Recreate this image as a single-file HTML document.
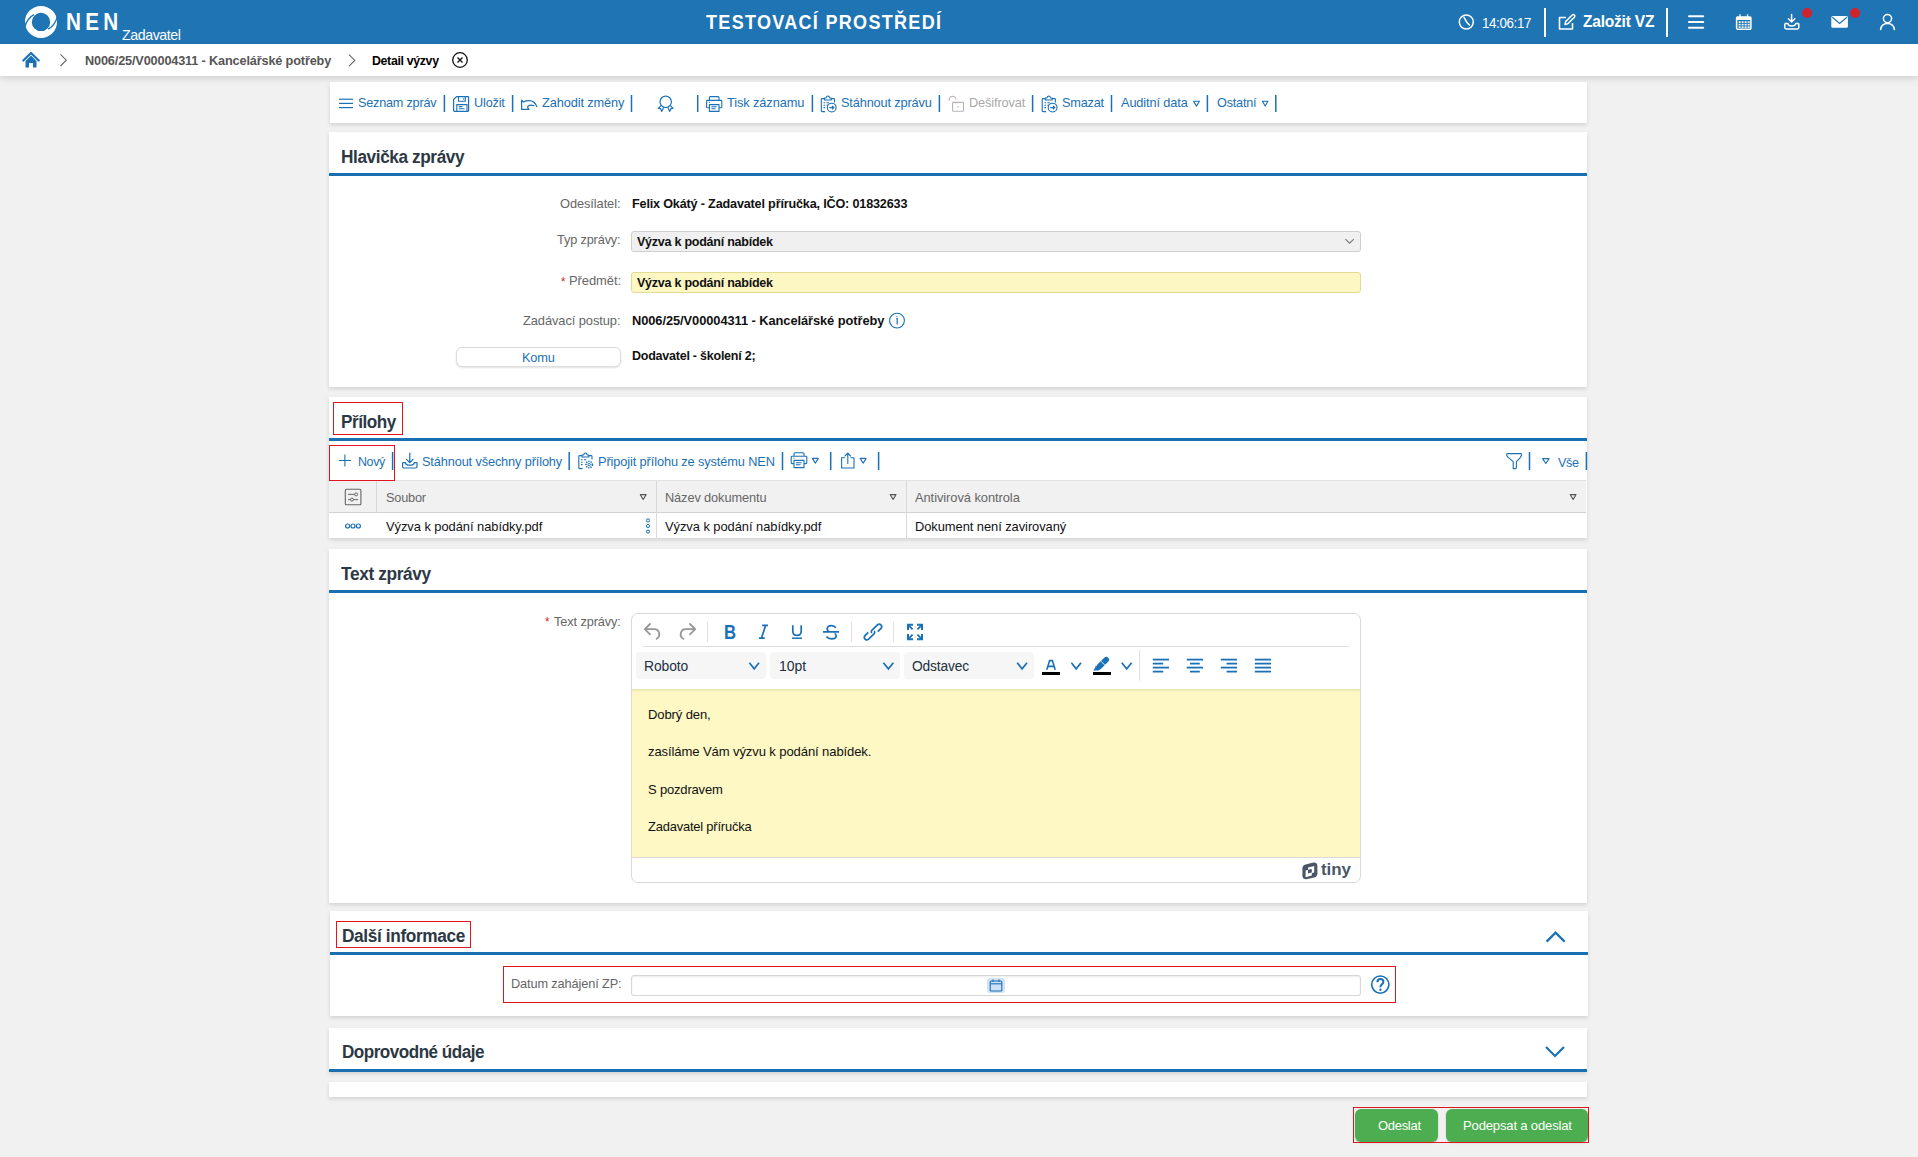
<!DOCTYPE html>
<html lang="cs"><head><meta charset="utf-8"><title>NEN - Detail výzvy</title>
<style>
html,body{margin:0;padding:0;}
body{width:1918px;height:1157px;overflow:hidden;background:#f1f1f1;position:relative;font-family:'Liberation Sans', sans-serif;}
span{position:absolute;white-space:nowrap;}
svg{position:absolute;left:0;top:0;}
</style></head><body>
<div style="position:absolute;left:0px;top:0px;width:1918px;height:44px;background:#1f74b4"></div>
<div style="position:absolute;left:0px;top:44px;width:1918px;height:32px;background:#fff;box-shadow:0 2px 7px rgba(0,0,0,0.15)"></div>
<div style="position:absolute;left:330px;top:82px;width:1257px;height:41px;background:#fff;box-shadow:0 2px 4px rgba(0,0,0,0.13)"></div>
<div style="position:absolute;left:329px;top:132px;width:1258px;height:255px;background:#fff;box-shadow:0 2px 4px rgba(0,0,0,0.13)"></div>
<div style="position:absolute;left:329px;top:397px;width:1258px;height:141px;background:#fff;box-shadow:0 2px 4px rgba(0,0,0,0.13)"></div>
<div style="position:absolute;left:329px;top:549px;width:1258px;height:354px;background:#fff;box-shadow:0 2px 4px rgba(0,0,0,0.13)"></div>
<div style="position:absolute;left:330px;top:911px;width:1258px;height:105px;background:#fff;box-shadow:0 2px 4px rgba(0,0,0,0.13)"></div>
<div style="position:absolute;left:329px;top:1028px;width:1258px;height:44px;background:#fff;box-shadow:0 2px 4px rgba(0,0,0,0.13)"></div>
<div style="position:absolute;left:329px;top:1082px;width:1258px;height:15px;background:#fff;box-shadow:0 2px 4px rgba(0,0,0,0.13)"></div>
<div style="position:absolute;left:329px;top:173px;width:1258px;height:3px;background:#1a6fb1"></div>
<div style="position:absolute;left:631px;top:231px;width:730px;height:21px;background:#f0f0f0;border:1px solid #cfcfcf;border-radius:3px;box-sizing:border-box"></div>
<div style="position:absolute;left:631px;top:272px;width:730px;height:21px;background:#fdf7c3;border:1px solid #e3db93;border-radius:3px;box-sizing:border-box"></div>
<div style="position:absolute;left:456px;top:347px;width:165px;height:20px;background:#fff;border:1px solid #dcdcdc;border-radius:6px;box-sizing:border-box;box-shadow:0 1px 2px rgba(0,0,0,0.12)"></div>
<div style="position:absolute;left:333px;top:402px;width:70px;height:33px;border:1.5px solid #e0161f;box-sizing:border-box;z-index:5"></div>
<div style="position:absolute;left:329px;top:438px;width:1258px;height:3px;background:#1a6fb1"></div>
<div style="position:absolute;left:329px;top:445px;width:66px;height:36px;border:1.5px solid #e0161f;box-sizing:border-box;z-index:5"></div>
<div style="position:absolute;left:329px;top:480px;width:1257px;height:33px;background:#f1f1f1;border-top:1px solid #e2e2e2;border-bottom:1px solid #d2d2d2;box-sizing:border-box"></div>
<div style="position:absolute;left:376px;top:481px;width:1px;height:32px;background:#d9d9d9"></div>
<div style="position:absolute;left:656px;top:481px;width:1px;height:57px;background:#d9d9d9"></div>
<div style="position:absolute;left:906px;top:481px;width:1px;height:57px;background:#d9d9d9"></div>
<div style="position:absolute;left:329px;top:590px;width:1258px;height:3px;background:#1a6fb1"></div>
<div style="position:absolute;left:631px;top:613px;width:730px;height:270px;background:#fff;border:1px solid #d9d9d9;border-radius:7px;box-sizing:border-box"></div>
<div style="position:absolute;left:632px;top:689px;width:728px;height:168px;background:#fdf8c4;border-bottom:1px solid #d9d9d9;box-shadow:inset 0 3px 3px -2px rgba(0,0,0,0.12)"></div>
<div style="position:absolute;left:643px;top:645.5px;width:706px;height:1.2000000000000455px;background:#dedede"></div>
<div style="position:absolute;left:707.1px;top:622px;width:1.1000000000000227px;height:20px;background:#e0e0e0"></div>
<div style="position:absolute;left:851.2px;top:622px;width:1.1000000000000227px;height:20px;background:#e0e0e0"></div>
<div style="position:absolute;left:893.3px;top:622px;width:1.1000000000000227px;height:20px;background:#e0e0e0"></div>
<div style="position:absolute;left:1138.9px;top:650px;width:1.099999999999909px;height:31px;background:#e0e0e0"></div>
<div style="position:absolute;left:636px;top:652px;width:130px;height:27px;background:#f6f6f6;border-radius:4px"></div>
<div style="position:absolute;left:770px;top:652px;width:130px;height:27px;background:#f6f6f6;border-radius:4px"></div>
<div style="position:absolute;left:904px;top:652px;width:130px;height:27px;background:#f6f6f6;border-radius:4px"></div>
<div style="position:absolute;left:1042px;top:672px;width:18px;height:3px;background:#000"></div>
<div style="position:absolute;left:1093px;top:672px;width:18px;height:3px;background:#000"></div>
<div style="position:absolute;left:336px;top:921px;width:135px;height:27px;border:1.5px solid #e0161f;box-sizing:border-box;z-index:5"></div>
<div style="position:absolute;left:330px;top:952px;width:1258px;height:3px;background:#1a6fb1"></div>
<div style="position:absolute;left:503px;top:966px;width:893px;height:37px;border:1.5px solid #e0161f;box-sizing:border-box;z-index:5"></div>
<div style="position:absolute;left:631px;top:975px;width:730px;height:21px;background:#fff;border:1px solid #d6d6d6;border-radius:3px;box-sizing:border-box;box-shadow:inset 0 1px 2px rgba(0,0,0,0.08)"></div>
<div style="position:absolute;left:987px;top:977.6px;width:18px;height:15.799999999999955px;background:#cfe1f3;border-radius:3px"></div>
<div style="position:absolute;left:329px;top:1069px;width:1258px;height:3px;background:#1a6fb1"></div>
<div style="position:absolute;left:1353px;top:1107px;width:236px;height:36px;border:1.5px solid #e0161f;box-sizing:border-box;z-index:5"></div>
<div style="position:absolute;left:1355px;top:1109px;width:83px;height:32.5px;background:#4cae50;border-radius:6px;box-shadow:0 1px 2px rgba(0,0,0,0.2)"></div>
<div style="position:absolute;left:1446px;top:1109px;width:142px;height:32.5px;background:#4cae50;border-radius:6px;box-shadow:0 1px 2px rgba(0,0,0,0.2)"></div>

<span style="left:65.7px;top:10.83px;font-size:23.5px;line-height:23.5px;font-weight:700;color:#fff;letter-spacing:4.903px;transform:scaleX(0.8800);transform-origin:0 0;">NEN</span>
<span style="left:122.0px;top:27.25px;font-size:15px;line-height:15px;font-weight:400;color:#fff;letter-spacing:-0.442px;transform:scaleX(0.9464);transform-origin:0 0;">Zadavatel</span>
<span style="left:705.8px;top:12.30px;font-size:20px;line-height:20px;font-weight:700;color:#fff;letter-spacing:1.459px;transform:scaleX(0.9000);transform-origin:0 0;">TESTOVACÍ PROSTŘEDÍ</span>
<span style="left:1482.4px;top:15.60px;font-size:14px;line-height:14px;font-weight:400;color:#fff;letter-spacing:-0.373px;transform:scaleX(0.9521);transform-origin:0 0;">14:06:17</span>
<span style="left:1582.5px;top:14.40px;font-size:16px;line-height:16px;font-weight:700;color:#fff;letter-spacing:-0.235px;transform:scaleX(0.9721);transform-origin:0 0;">Založit VZ</span>
<span style="left:84.5px;top:53.95px;font-size:13px;line-height:13px;font-weight:700;color:#555;letter-spacing:-0.156px;transform:scaleX(0.9770);transform-origin:0 0;">N006/25/V00004311 - Kancelářské potřeby</span>
<span style="left:372.0px;top:53.95px;font-size:13px;line-height:13px;font-weight:700;color:#000;letter-spacing:-0.347px;transform:scaleX(0.9487);transform-origin:0 0;">Detail výzvy</span>
<span style="left:358.4px;top:95.75px;font-size:13px;line-height:13px;font-weight:400;color:#1b71b6;letter-spacing:-0.207px;transform:scaleX(0.9726);transform-origin:0 0;">Seznam zpráv</span>
<span style="left:473.6px;top:95.75px;font-size:13px;line-height:13px;font-weight:400;color:#1b71b6;letter-spacing:-0.164px;transform:scaleX(0.9748);transform-origin:0 0;">Uložit</span>
<span style="left:541.5px;top:95.75px;font-size:13px;line-height:13px;font-weight:400;color:#1b71b6;letter-spacing:-0.116px;transform:scaleX(0.9836);transform-origin:0 0;">Zahodit změny</span>
<span style="left:727.0px;top:95.75px;font-size:13px;line-height:13px;font-weight:400;color:#1b71b6;letter-spacing:-0.106px;transform:scaleX(0.9853);transform-origin:0 0;">Tisk záznamu</span>
<span style="left:840.9px;top:95.75px;font-size:13px;line-height:13px;font-weight:400;color:#1b71b6;letter-spacing:-0.137px;transform:scaleX(0.9798);transform-origin:0 0;">Stáhnout zprávu</span>
<span style="left:968.6px;top:95.75px;font-size:13px;line-height:13px;font-weight:400;color:#a8a8a8;letter-spacing:-0.120px;transform:scaleX(0.9816);transform-origin:0 0;">Dešifrovat</span>
<span style="left:1061.8px;top:95.75px;font-size:13px;line-height:13px;font-weight:400;color:#1b71b6;letter-spacing:-0.200px;transform:scaleX(0.9773);transform-origin:0 0;">Smazat</span>
<span style="left:1121.0px;top:95.75px;font-size:13px;line-height:13px;font-weight:400;color:#1b71b6;letter-spacing:-0.119px;transform:scaleX(0.9812);transform-origin:0 0;">Auditní data</span>
<span style="left:1216.7px;top:95.75px;font-size:13px;line-height:13px;font-weight:400;color:#1b71b6;letter-spacing:-0.196px;transform:scaleX(0.9719);transform-origin:0 0;">Ostatní</span>
<span style="left:341.4px;top:147.70px;font-size:18px;line-height:18px;font-weight:700;color:#2c3844;letter-spacing:-0.420px;transform:scaleX(0.9565);transform-origin:0 0;">Hlavička zprávy</span>
<span style="left:560.3px;top:197.15px;font-size:13px;line-height:13px;font-weight:400;color:#666666;letter-spacing:-0.083px;transform:scaleX(0.9866);transform-origin:0 0;">Odesílatel:</span>
<span style="left:631.8px;top:197.15px;font-size:13px;line-height:13px;font-weight:700;color:#111;letter-spacing:-0.182px;transform:scaleX(0.9713);transform-origin:0 0;">Felix Okátý - Zadavatel příručka, IČO: 01832633</span>
<span style="left:557.2px;top:232.75px;font-size:13px;line-height:13px;font-weight:400;color:#666666;letter-spacing:-0.145px;transform:scaleX(0.9782);transform-origin:0 0;">Typ zprávy:</span>
<span style="left:636.5px;top:234.95px;font-size:13px;line-height:13px;font-weight:700;color:#111;letter-spacing:-0.259px;transform:scaleX(0.9630);transform-origin:0 0;">Výzva k podání nabídek</span>
<span style="left:560.9px;top:275.80px;font-size:12px;line-height:12px;font-weight:400;color:#d4202a;letter-spacing:-0.242px;transform:scaleX(0.9482);transform-origin:0 0;">*</span>
<span style="left:568.7px;top:273.95px;font-size:13px;line-height:13px;font-weight:400;color:#666666;letter-spacing:-0.047px;transform:scaleX(0.9938);transform-origin:0 0;">Předmět:</span>
<span style="left:636.5px;top:276.15px;font-size:13px;line-height:13px;font-weight:700;color:#111;letter-spacing:-0.259px;transform:scaleX(0.9630);transform-origin:0 0;">Výzva k podání nabídek</span>
<span style="left:522.9px;top:313.95px;font-size:13px;line-height:13px;font-weight:400;color:#666666;letter-spacing:-0.075px;transform:scaleX(0.9887);transform-origin:0 0;">Zadávací postup:</span>
<span style="left:631.8px;top:313.95px;font-size:13px;line-height:13px;font-weight:700;color:#111;letter-spacing:-0.074px;transform:scaleX(0.9891);transform-origin:0 0;">N006/25/V00004311 - Kancelářské potřeby</span>
<span style="left:522.4px;top:351.15px;font-size:13px;line-height:13px;font-weight:400;color:#1b71b6;letter-spacing:-0.196px;transform:scaleX(0.9826);transform-origin:0 0;">Komu</span>
<span style="left:631.8px;top:348.55px;font-size:13px;line-height:13px;font-weight:700;color:#111;letter-spacing:-0.244px;transform:scaleX(0.9616);transform-origin:0 0;">Dodavatel - školení 2;</span>
<span style="left:341.4px;top:412.70px;font-size:18px;line-height:18px;font-weight:700;color:#2c3844;letter-spacing:-0.488px;transform:scaleX(0.9520);transform-origin:0 0;">Přílohy</span>
<span style="left:357.6px;top:454.95px;font-size:13px;line-height:13px;font-weight:400;color:#1b71b6;letter-spacing:-0.413px;transform:scaleX(0.9582);transform-origin:0 0;">Nový</span>
<span style="left:421.7px;top:454.95px;font-size:13px;line-height:13px;font-weight:400;color:#1b71b6;letter-spacing:-0.127px;transform:scaleX(0.9800);transform-origin:0 0;">Stáhnout všechny přílohy</span>
<span style="left:598.0px;top:454.95px;font-size:13px;line-height:13px;font-weight:400;color:#1b71b6;letter-spacing:-0.110px;transform:scaleX(0.9821);transform-origin:0 0;">Připojit přílohu ze systému NEN</span>
<span style="left:1558.0px;top:456.15px;font-size:13px;line-height:13px;font-weight:400;color:#1b71b6;letter-spacing:-0.357px;transform:scaleX(0.9681);transform-origin:0 0;">Vše</span>
<span style="left:385.5px;top:491.15px;font-size:13px;line-height:13px;font-weight:400;color:#666666;letter-spacing:-0.184px;transform:scaleX(0.9780);transform-origin:0 0;">Soubor</span>
<span style="left:665.4px;top:491.15px;font-size:13px;line-height:13px;font-weight:400;color:#666666;letter-spacing:-0.118px;transform:scaleX(0.9842);transform-origin:0 0;">Název dokumentu</span>
<span style="left:915.0px;top:491.15px;font-size:13px;line-height:13px;font-weight:400;color:#666666;letter-spacing:-0.060px;transform:scaleX(0.9899);transform-origin:0 0;">Antivirová kontrola</span>
<span style="left:385.5px;top:519.75px;font-size:13px;line-height:13px;font-weight:400;color:#111;letter-spacing:-0.049px;transform:scaleX(0.9923);transform-origin:0 0;">Výzva k podání nabídky.pdf</span>
<span style="left:665.4px;top:519.75px;font-size:13px;line-height:13px;font-weight:400;color:#111;letter-spacing:-0.049px;transform:scaleX(0.9923);transform-origin:0 0;">Výzva k podání nabídky.pdf</span>
<span style="left:915.0px;top:519.75px;font-size:13px;line-height:13px;font-weight:400;color:#111;letter-spacing:-0.057px;transform:scaleX(0.9914);transform-origin:0 0;">Dokument není zavirovaný</span>
<span style="left:341.4px;top:564.50px;font-size:18px;line-height:18px;font-weight:700;color:#2c3844;letter-spacing:-0.383px;transform:scaleX(0.9608);transform-origin:0 0;">Text zprávy</span>
<span style="left:545.2px;top:616.40px;font-size:12px;line-height:12px;font-weight:400;color:#d4202a;letter-spacing:-0.242px;transform:scaleX(0.9482);transform-origin:0 0;">*</span>
<span style="left:553.7px;top:615.15px;font-size:13px;line-height:13px;font-weight:400;color:#666666;letter-spacing:-0.113px;transform:scaleX(0.9821);transform-origin:0 0;">Text zprávy:</span>
<span style="left:723.8px;top:622.71px;font-size:19.4px;line-height:19.4px;font-weight:700;color:#1b71b6;letter-spacing:-0.760px;transform:scaleX(0.8600);transform-origin:0 0;">B</span>
<span style="left:644.2px;top:659.10px;font-size:14px;line-height:14px;font-weight:400;color:#222f3e;letter-spacing:-0.096px;transform:scaleX(0.9894);transform-origin:0 0;">Roboto</span>
<span style="left:779.4px;top:659.10px;font-size:14px;line-height:14px;font-weight:400;color:#222f3e;letter-spacing:-0.025px;transform:scaleX(0.9972);transform-origin:0 0;">10pt</span>
<span style="left:912.0px;top:659.30px;font-size:14px;line-height:14px;font-weight:400;color:#222f3e;letter-spacing:-0.140px;transform:scaleX(0.9835);transform-origin:0 0;">Odstavec</span>
<span style="left:648.0px;top:708.10px;font-size:13.3px;line-height:13.3px;font-weight:400;color:#111;letter-spacing:-0.132px;transform:scaleX(0.9818);transform-origin:0 0;">Dobrý den,</span>
<span style="left:648.0px;top:744.70px;font-size:13.3px;line-height:13.3px;font-weight:400;color:#111;letter-spacing:-0.114px;transform:scaleX(0.9827);transform-origin:0 0;">zasíláme Vám výzvu k podání nabídek.</span>
<span style="left:648.0px;top:782.70px;font-size:13.3px;line-height:13.3px;font-weight:400;color:#111;letter-spacing:-0.179px;transform:scaleX(0.9771);transform-origin:0 0;">S pozdravem</span>
<span style="left:648.0px;top:819.70px;font-size:13.3px;line-height:13.3px;font-weight:400;color:#111;letter-spacing:-0.195px;transform:scaleX(0.9699);transform-origin:0 0;">Zadavatel příručka</span>
<span style="left:1320.9px;top:861.35px;font-size:17px;line-height:17px;font-weight:700;color:#4a5665;letter-spacing:-0.039px;transform:scaleX(0.9961);transform-origin:0 0;">tiny</span>
<span style="left:342.0px;top:926.90px;font-size:18px;line-height:18px;font-weight:700;color:#2c3844;letter-spacing:-0.389px;transform:scaleX(0.9594);transform-origin:0 0;">Další informace</span>
<span style="left:510.6px;top:977.15px;font-size:13px;line-height:13px;font-weight:400;color:#666666;letter-spacing:-0.127px;transform:scaleX(0.9811);transform-origin:0 0;">Datum zahájení ZP:</span>
<span style="left:341.7px;top:1043.30px;font-size:18px;line-height:18px;font-weight:700;color:#2c3844;letter-spacing:-0.531px;transform:scaleX(0.9496);transform-origin:0 0;">Doprovodné údaje</span>
<span style="left:1378.0px;top:1118.53px;font-size:13.5px;line-height:13.5px;font-weight:400;color:#fff;letter-spacing:-0.300px;transform:scaleX(0.9613);transform-origin:0 0;">Odeslat</span>
<span style="left:1463.0px;top:1118.53px;font-size:13.5px;line-height:13.5px;font-weight:400;color:#fff;letter-spacing:-0.197px;transform:scaleX(0.9711);transform-origin:0 0;">Podepsat a odeslat</span>

<svg width="1918" height="1157" viewBox="0 0 1918 1157">
<circle cx="41" cy="21.9" r="12.6" fill="none" stroke="#fff" stroke-width="6.8"/>
<path d="M24.6 27.2 Q27.2 18.2 33.9 14.6" fill="none" stroke="#1f74b4" stroke-width="1.4"/>
<path d="M57.4 16.6 Q54.8 25.6 48.1 29.2" fill="none" stroke="#1f74b4" stroke-width="1.4"/>
<circle cx="1466.3" cy="22" r="7" fill="none" stroke="#fff" stroke-width="1.5"/>
<path d="M1464 17.4 L1466.8 22.2 L1469.4 25" fill="none" stroke="#fff" stroke-width="1.5" stroke-linecap="round"/>
<rect x="1544" y="8" width="2" height="29" fill="#fff"/>
<path d="M1566 17.5 H1559.5 V29 H1572.5 V23" fill="none" stroke="#fff" stroke-width="1.6" stroke-linejoin="round"/>
<path d="M1565 24.5 L1565.6 21.6 L1572.2 15 Q1573.3 14 1574.4 15.1 Q1575.4 16.2 1574.4 17.2 L1567.8 23.8 Z" fill="none" stroke="#fff" stroke-width="1.5" stroke-linejoin="round"/>
<rect x="1666" y="8" width="2" height="29" fill="#fff"/>
<line x1="1689" y1="16.2" x2="1703.2" y2="16.2" stroke="#fff" stroke-width="2" stroke-linecap="round"/>
<line x1="1689" y1="22" x2="1703.2" y2="22" stroke="#fff" stroke-width="2" stroke-linecap="round"/>
<line x1="1689" y1="27.7" x2="1703.2" y2="27.7" stroke="#fff" stroke-width="2" stroke-linecap="round"/>
<rect x="1736.6" y="17" width="14.3" height="12.2" rx="1" fill="none" stroke="#fff" stroke-width="1.5"/>
<rect x="1736.6" y="17" width="14.3" height="3" fill="#fff"/>
<line x1="1740" y1="14.3" x2="1740" y2="18" stroke="#fff" stroke-width="1.3"/><line x1="1747.5" y1="14.3" x2="1747.5" y2="18" stroke="#fff" stroke-width="1.3"/>
<g fill="#fff"><rect x="1738.6" y="21.3" width="2" height="1.6"/><rect x="1738.6" y="23.8" width="2" height="1.6"/><rect x="1738.6" y="26.3" width="2" height="1.6"/><rect x="1741.6" y="21.3" width="2" height="1.6"/><rect x="1741.6" y="23.8" width="2" height="1.6"/><rect x="1741.6" y="26.3" width="2" height="1.6"/><rect x="1744.6" y="21.3" width="2" height="1.6"/><rect x="1744.6" y="23.8" width="2" height="1.6"/><rect x="1744.6" y="26.3" width="2" height="1.6"/><rect x="1747.6" y="21.3" width="2" height="1.6"/><rect x="1747.6" y="23.8" width="2" height="1.6"/><rect x="1747.6" y="26.3" width="2" height="1.6"/></g>
<path d="M1791.6 14.5 V21.8 M1788.4 18.8 L1791.6 22 L1794.8 18.8" fill="none" stroke="#fff" stroke-width="1.5" stroke-linecap="round" stroke-linejoin="round"/>
<path d="M1784.8 23.6 V27.6 Q1784.8 29 1786.2 29 H1797.4 Q1798.8 29 1798.8 27.6 V23.6 M1784.8 23.6 H1788 Q1788 26 1791.8 26 Q1795.6 26 1795.6 23.6 H1798.8" fill="none" stroke="#fff" stroke-width="1.5" stroke-linejoin="round"/>
<circle cx="1807.1" cy="13" r="5" fill="#d0242b"/>
<rect x="1831.3" y="16" width="16.6" height="11.7" rx="1.5" fill="#fff"/>
<path d="M1832.3 17.2 L1839.6 23.4 L1846.9 17.2" fill="none" stroke="#1f74b4" stroke-width="1.2"/>
<circle cx="1855.1" cy="13" r="5" fill="#d0242b"/>
<circle cx="1887.5" cy="18.6" r="4.1" fill="none" stroke="#fff" stroke-width="1.5"/>
<path d="M1880.6 29.6 Q1881.3 23.4 1887.5 23.4 Q1893.7 23.4 1894.4 29.6" fill="none" stroke="#fff" stroke-width="1.5" stroke-linecap="round"/>
<path d="M23.3 60.5 L31 53 L38.7 60.5" fill="none" stroke="#1b71b6" stroke-width="2.2" stroke-linecap="round" stroke-linejoin="round"/>
<path d="M25.5 61 L31 55.6 L36.5 61 V67.5 H33 V63 H29 V67.5 H25.5 Z" fill="#1b71b6"/>
<path d="M60.5 54.4 L66.3 60.2 L60.5 66" fill="none" stroke="#666" stroke-width="1.1"/>
<path d="M349 54.6 L354.8 60.4 L349 66.2" fill="none" stroke="#666" stroke-width="1.1"/>
<circle cx="460" cy="60" r="7.3" fill="none" stroke="#111" stroke-width="1.3"/>
<path d="M457.5 57.5 L462.5 62.5 M462.5 57.5 L457.5 62.5" stroke="#111" stroke-width="1.3"/>
<rect x="443.65" y="95" width="1.5" height="17" fill="#1b71b6"/>
<rect x="511.85" y="95" width="1.5" height="17" fill="#1b71b6"/>
<rect x="630.75" y="95" width="1.5" height="17" fill="#1b71b6"/>
<rect x="696.95" y="95" width="1.5" height="17" fill="#1b71b6"/>
<rect x="811.65" y="95" width="1.5" height="17" fill="#1b71b6"/>
<rect x="938.65" y="95" width="1.5" height="17" fill="#1b71b6"/>
<rect x="1031.85" y="95" width="1.5" height="17" fill="#1b71b6"/>
<rect x="1110.75" y="95" width="1.5" height="17" fill="#1b71b6"/>
<rect x="1206.65" y="95" width="1.5" height="17" fill="#1b71b6"/>
<rect x="1275.05" y="95" width="1.5" height="17" fill="#1b71b6"/>
<line x1="339" y1="99.2" x2="353" y2="99.2" stroke="#1b71b6" stroke-width="1.2"/>
<line x1="339" y1="103.4" x2="353" y2="103.4" stroke="#1b71b6" stroke-width="1.2"/>
<line x1="339" y1="107.6" x2="353" y2="107.6" stroke="#1b71b6" stroke-width="1.2"/>
<path d="M456.5 96.6 H467.8 Q468.6 96.6 468.6 97.4 V110.6 Q468.6 111.4 467.8 111.4 H454.4 Q453.6 111.4 453.6 110.6 V99.5 Z" fill="none" stroke="#1b71b6" stroke-width="1.2" stroke-linejoin="round"/>
<path d="M458.5 96.6 V101.2 H465.3 V96.6 M456.8 111.4 V104.6 H467 V111.4 M458.8 106.6 H462.4 M458.8 108.8 H464.6 M463.6 98.2 V99.6" fill="none" stroke="#1b71b6" stroke-width="1.1"/>
<path d="M521.6 100 V109.4 H529 M521.6 100.2 L523.4 102 Q525.6 100.6 529.2 100.6 Q534.6 100.6 536.8 106.6 M529 109.4 Q527 107.6 528 106.2 Q529.8 104.6 533.8 105.6" fill="none" stroke="#1b71b6" stroke-width="1.2" stroke-linejoin="round" stroke-linecap="round"/>
<circle cx="665.7" cy="101.8" r="5.7" fill="none" stroke="#1b71b6" stroke-width="1.2"/>
<path d="M661.2 105.4 L658.4 108.4 L660.6 108.6 L661.6 111.4 L663.6 107.4 M670.2 105.4 L673 108.4 L670.8 108.6 L669.8 111.4 L667.8 107.4" fill="none" stroke="#1b71b6" stroke-width="1.2" stroke-linejoin="round"/>
<path d="M709.4 100.4 V97.6 Q709.4 96.6 710.4 96.6 H718 Q719 96.6 719 97.6 V100.4 M709.4 107.8 H707.4 Q706.6 107.8 706.6 107 V101.2 Q706.6 100.4 707.4 100.4 H721 Q721.8 100.4 721.8 101.2 V107 Q721.8 107.8 721 107.8 H719 M709.4 104.6 H719 V111.4 H709.4 Z M711.4 106.8 H716.6 M711.4 108.8 H715.6 M708.8 102.4 H709.8" fill="none" stroke="#1b71b6" stroke-width="1.1" stroke-linejoin="round"/>
<path d="M824.1 98.6 H822.1 Q821.3 98.6 821.3 99.4 V111 Q821.3 111.6 822.1 111.6 H825.1 M831.7 98.6 H833.7 Q834.5 98.6 834.5 99.4 V102.4 M824.5 100 V98 H826.1 Q826.5 96 827.9 96 Q829.3 96 829.7 98 H831.3 V100 Z M823.5 102.8 H825.1 M826.5 102.8 H828.9 M823.5 105.2 H825.1 M826.5 105.2 H828.1 M823.5 107.6 H825.1" fill="none" stroke="#1b71b6" stroke-width="1.1" stroke-linejoin="round"/><circle cx="831.7" cy="107.6" r="4.4" fill="#fff" stroke="#1b71b6" stroke-width="1.1"/><path d="M829.3 107.6 H833.9 M832.1 105.8 L833.9 107.6 L832.1 109.4" fill="none" stroke="#1b71b6" stroke-width="1.1"/>
<path d="M949.2 100.8 V99.6 Q949.2 96.2 952.6 96.2 Q955.6 96.2 956 99.4" fill="none" stroke="#b9b3b8" stroke-width="1.1"/><rect x="952.6" y="102.4" width="10.9" height="8.9" rx="0.8" fill="none" stroke="#b9b3b8" stroke-width="1.1"/><line x1="958" y1="106" x2="958" y2="107.4" stroke="#b9b3b8" stroke-width="1.1"/>
<path d="M1045.0 98.6 H1043.0 Q1042.2 98.6 1042.2 99.4 V111 Q1042.2 111.6 1043.0 111.6 H1046.0 M1052.6000000000001 98.6 H1054.6000000000001 Q1055.4 98.6 1055.4 99.4 V102.4 M1045.4 100 V98 H1047.0 Q1047.4 96 1048.8000000000002 96 Q1050.2 96 1050.6000000000001 98 H1052.2 V100 Z M1044.4 102.8 H1046.0 M1047.4 102.8 H1049.8000000000002 M1044.4 105.2 H1046.0 M1047.4 105.2 H1049.0 M1044.4 107.6 H1046.0" fill="none" stroke="#1b71b6" stroke-width="1.1" stroke-linejoin="round"/><circle cx="1052.6000000000001" cy="107.6" r="4.4" fill="#fff" stroke="#1b71b6" stroke-width="1.1"/><path d="M1050.2 107.6 H1054.8000000000002 M1053.0 105.8 L1054.8000000000002 107.6 L1053.0 109.4" fill="none" stroke="#1b71b6" stroke-width="1.1"/>
<path d="M1193.6 101.19999999999999 H1199.4 L1196.5 106.1 Z" fill="none" stroke="#1b71b6" stroke-width="1.1" stroke-linejoin="round"/>
<path d="M1262.3999999999999 101.19999999999999 H1267.9 L1265.15 106.1 Z" fill="none" stroke="#1b71b6" stroke-width="1.1" stroke-linejoin="round"/>
<path d="M1345.4 239.2 L1349.6 243.2 L1353.8 239.2" fill="none" stroke="#777" stroke-width="1.1"/>
<circle cx="897" cy="320.6" r="7.4" fill="none" stroke="#1b71b6" stroke-width="1.1"/>
<path d="M896.2 318.6 L897.2 318.6 L897.2 324.6 M896.8 316.2 V316.9" fill="none" stroke="#1b71b6" stroke-width="1.2"/>
<rect x="391.85" y="452" width="1.5" height="18" fill="#1b71b6"/>
<rect x="568.45" y="452" width="1.5" height="18" fill="#1b71b6"/>
<rect x="781.75" y="452" width="1.5" height="18" fill="#1b71b6"/>
<rect x="829.95" y="452" width="1.5" height="18" fill="#1b71b6"/>
<rect x="877.85" y="452" width="1.5" height="18" fill="#1b71b6"/>
<rect x="1528.75" y="452" width="1.5" height="18" fill="#1b71b6"/>
<rect x="1585.65" y="452" width="1.5" height="18" fill="#1b71b6"/>
<path d="M344.9 454.6 V466.4 M339 460.5 H351" stroke="#1b71b6" stroke-width="1.1"/>
<path d="M409.8 453 V462.4 M406.6 459.4 L409.8 462.6 L413 459.4" fill="none" stroke="#1b71b6" stroke-width="1.2" stroke-linecap="round"/>
<path d="M402.6 462.6 V466.6 Q402.6 468 404 468 H415.6 Q417 468 417 466.6 V462.6 M402.6 462.6 H405.4 Q405.6 465.2 409.8 465.2 Q414 465.2 414.2 462.6 H417" fill="none" stroke="#1b71b6" stroke-width="1.2" stroke-linejoin="round"/>
<path d="M581.6 455.6 H579.6 Q578.8 455.6 578.8 456.4 V468 Q578.8 468.6 579.6 468.6 H582.6 M589.2 455.6 H591.2 Q592 455.6 592 456.4 V459.4 M582 457 V455 H583.6 Q584 453 585.4 453 Q586.8 453 587.2 455 H588.8 V457 Z M581 459.8 H582.6 M584 459.8 H586.4 M581 462.2 H582.6 M581 464.6 H582.6" fill="none" stroke="#1b71b6" stroke-width="1.1" stroke-linejoin="round"/><circle cx="589.2" cy="464.6" r="3.2" fill="#fff" stroke="#1b71b6" stroke-width="1.6" stroke-dasharray="1.3 1"/><circle cx="589.2" cy="464.6" r="1.2" fill="none" stroke="#1b71b6" stroke-width="1"/>
<path d="M794 456.2 V453.8 Q794 452.8 795 452.8 H803 Q804 452.8 804 453.8 V456.2 M794 463.6 H792 Q791.2 463.6 791.2 462.8 V457 Q791.2 456.2 792 456.2 H806 Q806.8 456.2 806.8 457 V462.8 Q806.8 463.6 806 463.6 H804 M794 460.4 H804 V467.6 H794 Z M796 462.8 H801.6 M796 464.8 H800.6 M793.4 458.2 H794.4" fill="none" stroke="#1b71b6" stroke-width="1.1" stroke-linejoin="round"/>
<path d="M812.4 458.40000000000003 H818.3 L815.3499999999999 463.1 Z" fill="none" stroke="#1b71b6" stroke-width="1.1" stroke-linejoin="round"/>
<path d="M844.6 457.8 H841.6 V468 H854 V457.8 H851 M847.8 463.4 V453.4 M845 456 L847.8 453.2 L850.6 456" fill="none" stroke="#1b71b6" stroke-width="1.1" stroke-linejoin="round" stroke-linecap="round"/>
<path d="M860.2 458.40000000000003 H866.1 L863.1500000000001 463.1 Z" fill="none" stroke="#1b71b6" stroke-width="1.1" stroke-linejoin="round"/>
<path d="M1506.6 454.6 Q1506.6 453.6 1507.8 453.6 H1520.6 Q1521.6 453.6 1521.6 454.6 Q1521.6 456 1520.2 457.6 L1516.4 461.6 V467.6 Q1516.4 468.6 1515.4 468.6 L1513.2 468.6 V461.6 L1508.2 457.4 Q1506.6 456 1506.6 454.6 Z" fill="none" stroke="#1b71b6" stroke-width="1.1" stroke-linejoin="round"/>
<path d="M1542.6 458.6 H1549.1000000000001 L1545.85 463.5 Z" fill="none" stroke="#1b71b6" stroke-width="1.1" stroke-linejoin="round"/>
<rect x="345.3" y="489.3" width="15.6" height="15.4" rx="1" fill="none" stroke="#666" stroke-width="1.1"/>
<path d="M348 494.4 H354.6 M348 499.6 H350.4 M353.6 499.6 H358.2" stroke="#666" stroke-width="1"/><circle cx="356.1" cy="494.4" r="1.5" fill="none" stroke="#666" stroke-width="1"/><circle cx="352" cy="499.6" r="1.5" fill="none" stroke="#666" stroke-width="1"/>
<path d="M640.3000000000001 494.6 H646.1 L643.2 499.5 Z" fill="none" stroke="#555" stroke-width="1.1" stroke-linejoin="round"/>
<path d="M890.2 494.6 H896.0 L893.1 499.5 Z" fill="none" stroke="#555" stroke-width="1.1" stroke-linejoin="round"/>
<path d="M1570.3 494.6 H1576.0 L1573.15 499.5 Z" fill="none" stroke="#555" stroke-width="1.1" stroke-linejoin="round"/>
<circle cx="347.6" cy="526" r="2" fill="none" stroke="#1b71b6" stroke-width="1.2"/>
<circle cx="353" cy="526" r="2" fill="none" stroke="#1b71b6" stroke-width="1.2"/>
<circle cx="358.4" cy="526" r="2" fill="none" stroke="#1b71b6" stroke-width="1.2"/>
<circle cx="648" cy="520.4" r="1.6" fill="none" stroke="#1b71b6" stroke-width="1"/>
<circle cx="648" cy="526" r="1.6" fill="none" stroke="#1b71b6" stroke-width="1"/>
<circle cx="648" cy="531.6" r="1.6" fill="none" stroke="#1b71b6" stroke-width="1"/>
<path d="M650 624 L644.8 629.2 L650 634.4 M645 629.2 H654 A5.1 5.1 0 0 1 656.6 638.8" fill="none" stroke="#979797" stroke-width="1.8" stroke-linecap="round" stroke-linejoin="round"/>
<path d="M690 624 L695.2 629.2 L690 634.4 M695 629.2 H686 A5.1 5.1 0 0 0 683.4 638.8" fill="none" stroke="#979797" stroke-width="1.8" stroke-linecap="round" stroke-linejoin="round"/>
<path d="M762.2 625.4 H768 M759 638.2 H764.8 M765.6 625.4 L761.4 638.2" fill="none" stroke="#1b71b6" stroke-width="1.7"/>
<path d="M792.8 625.2 V631 Q792.8 635.4 797 635.4 Q801.2 635.4 801.2 631 V625.2" fill="none" stroke="#1b71b6" stroke-width="1.7"/><path d="M792 638.2 H802" stroke="#1b71b6" stroke-width="1.5"/>
<path d="M823 631.9 H839 M835.8 627.8 Q834.6 625.6 831.6 625.6 Q827.4 625.6 827.2 628.6 Q827 630.8 829.6 631.9 M834.6 633.4 Q836.2 634.4 836.2 636 Q836.2 638.8 831.6 638.8 Q828 638.8 826.4 636.6" fill="none" stroke="#1b71b6" stroke-width="1.7"/>
<path d="M877.8 631.6 L881 628.4 A2.55 2.55 0 0 0 877.4 624.8 L871.8 630.4 Q870.6 631.8 871.8 633" fill="none" stroke="#1b71b6" stroke-width="1.7"/><path d="M868.2 632.4 L865 635.6 A2.55 2.55 0 0 0 868.6 639.2 L874.2 633.6 Q875.4 632.2 874.2 631" fill="none" stroke="#1b71b6" stroke-width="1.7"/>
<path d="M908 630 V624.8 H913 M922 630 V624.8 H917 M908 634 V639.2 H913 M922 634 V639.2 H917" fill="none" stroke="#1b71b6" stroke-width="2"/><path d="M908.4 625.2 L912.6 629.4 M921.6 625.2 L917.4 629.4 M908.4 638.8 L912.6 634.6 M921.6 638.8 L917.4 634.6" fill="none" stroke="#1b71b6" stroke-width="1.8"/>
<path d="M749.4 662.8 L754.2 668.8 L759 662.8" fill="none" stroke="#1b71b6" stroke-width="1.7"/>
<path d="M883.4 662.8 L888.4 668.8 L893.4 662.8" fill="none" stroke="#1b71b6" stroke-width="1.7"/>
<path d="M1017.2 662.8 L1022.1 668.8 L1027 662.8" fill="none" stroke="#1b71b6" stroke-width="1.7"/>
<path d="M1071.4 662.8 L1076.2 668.8 L1081 662.8" fill="none" stroke="#1b71b6" stroke-width="1.7"/>
<path d="M1121.8 662.8 L1126.6999999999998 668.8 L1131.6 662.8" fill="none" stroke="#1b71b6" stroke-width="1.7"/>
<path d="M1046.8 669.8 L1049.6 660.6 H1052.4 L1055.2 669.8 M1048 666.4 H1054" fill="none" stroke="#1b71b6" stroke-width="1.6"/>
<path d="M1099.4 666.6 L1106.2 659.8" stroke="#1b71b6" stroke-width="5.6" stroke-linecap="round"/><path d="M1100.9 661.2 L1105.1 665.4" stroke="#fff" stroke-width="0.9"/><path d="M1095.8 665.4 L1100 669.6 L1098 670.6 H1093.2 L1095 668 Z" fill="#1b71b6"/>
<line x1="1152.8" y1="659.6" x2="1169.0" y2="659.6" stroke="#1b71b6" stroke-width="1.8"/><line x1="1152.8" y1="663.6" x2="1163.2" y2="663.6" stroke="#1b71b6" stroke-width="1.8"/><line x1="1152.8" y1="667.6" x2="1169.0" y2="667.6" stroke="#1b71b6" stroke-width="1.8"/><line x1="1152.8" y1="671.6" x2="1163.2" y2="671.6" stroke="#1b71b6" stroke-width="1.8"/>
<line x1="1186.8" y1="659.6" x2="1203.0" y2="659.6" stroke="#1b71b6" stroke-width="1.8"/><line x1="1190.0" y1="663.6" x2="1199.8" y2="663.6" stroke="#1b71b6" stroke-width="1.8"/><line x1="1186.8" y1="667.6" x2="1203.0" y2="667.6" stroke="#1b71b6" stroke-width="1.8"/><line x1="1190.0" y1="671.6" x2="1199.8" y2="671.6" stroke="#1b71b6" stroke-width="1.8"/>
<line x1="1220.8" y1="659.6" x2="1237.0" y2="659.6" stroke="#1b71b6" stroke-width="1.8"/><line x1="1226.6" y1="663.6" x2="1237.0" y2="663.6" stroke="#1b71b6" stroke-width="1.8"/><line x1="1220.8" y1="667.6" x2="1237.0" y2="667.6" stroke="#1b71b6" stroke-width="1.8"/><line x1="1226.6" y1="671.6" x2="1237.0" y2="671.6" stroke="#1b71b6" stroke-width="1.8"/>
<line x1="1254.8" y1="659.6" x2="1271.0" y2="659.6" stroke="#1b71b6" stroke-width="1.8"/><line x1="1254.8" y1="663.6" x2="1271.0" y2="663.6" stroke="#1b71b6" stroke-width="1.8"/><line x1="1254.8" y1="667.6" x2="1271.0" y2="667.6" stroke="#1b71b6" stroke-width="1.8"/><line x1="1254.8" y1="671.6" x2="1271.0" y2="671.6" stroke="#1b71b6" stroke-width="1.8"/>
<path d="M1302.4 868.4 Q1302.4 865.2 1305.6 864.4 L1312.4 862.8 Q1317.4 861.8 1317.4 866.4 V873.6 Q1317.4 876.8 1314.2 877.6 L1307.4 879 Q1302.4 880 1302.4 875.6 Z" fill="#4a5665"/>
<path d="M1308 867.6 L1314.2 866 V872.6 L1308 874.2 Z M1305.6 870.6 L1311.8 869 V875.6 L1305.6 877.2 Z" fill="#fff"/><path d="M1308 869.8 L1311.8 868.9 V872.6 L1308 873.5 Z" fill="#4a5665"/>
<path d="M1546.6 941.6 L1555.6 932.6 L1564.6 941.6" fill="none" stroke="#1b71b6" stroke-width="2.2"/>
<rect x="990.2" y="981" width="11.6" height="10" rx="1" fill="none" stroke="#1b71b6" stroke-width="1.1"/><line x1="990.2" y1="983.8" x2="1001.8" y2="983.8" stroke="#1b71b6" stroke-width="1.1"/><line x1="993" y1="979.6" x2="993" y2="982" stroke="#1b71b6" stroke-width="1.1"/><line x1="999" y1="979.6" x2="999" y2="982" stroke="#1b71b6" stroke-width="1.1"/>
<circle cx="1380.3" cy="984.6" r="8.6" fill="none" stroke="#1b71b6" stroke-width="1.6"/>
<path d="M1377.4 982.2 Q1377.4 979 1380.4 979 Q1383.4 979 1383.4 981.8 Q1383.4 983.6 1381.6 984.6 Q1380.4 985.4 1380.4 987.2" fill="none" stroke="#1b71b6" stroke-width="2"/><circle cx="1380.4" cy="989.8" r="1.2" fill="#1b71b6"/>
<path d="M1546 1047 L1555 1056 L1564 1047" fill="none" stroke="#1b71b6" stroke-width="2.2"/>

</svg>
</body></html>
